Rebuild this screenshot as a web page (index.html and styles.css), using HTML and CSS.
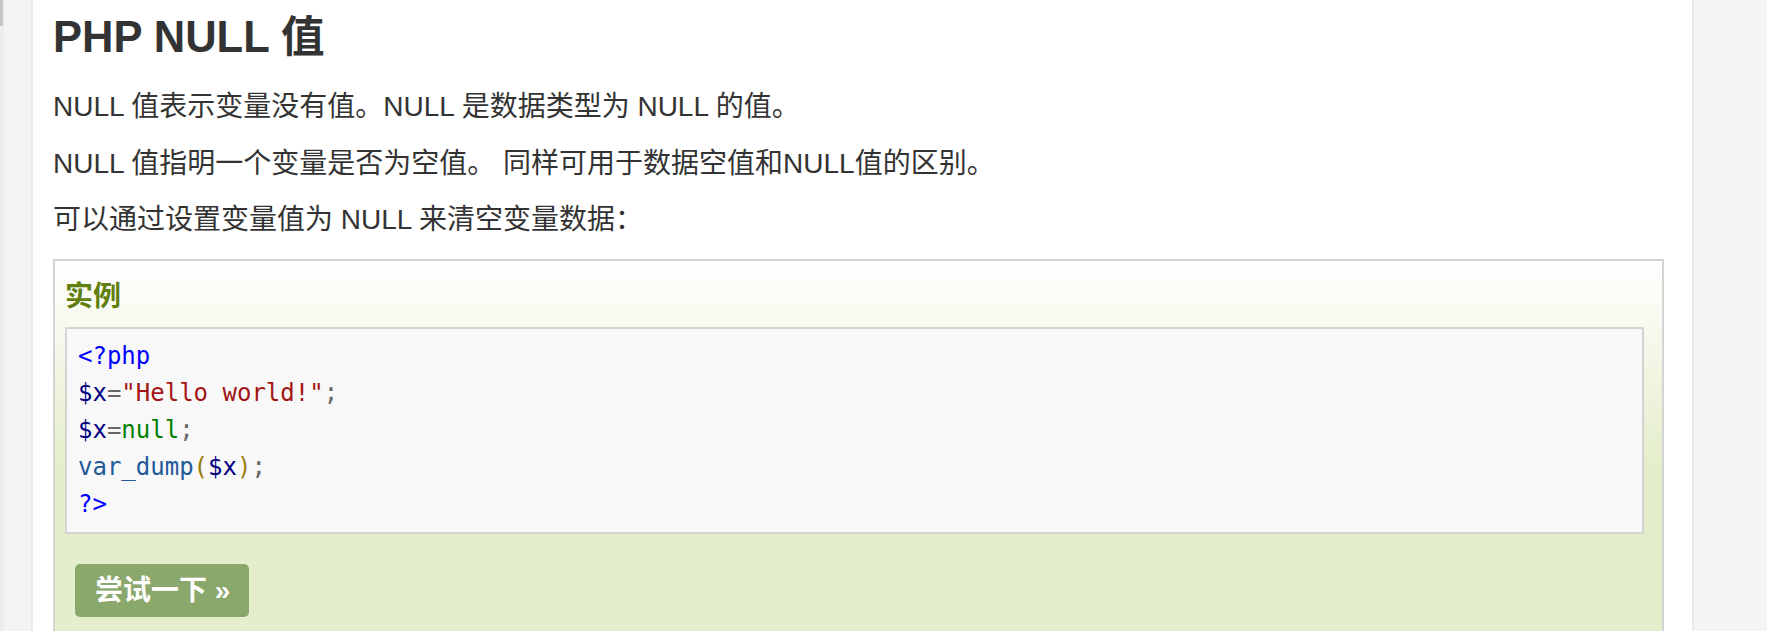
FILE: index.html
```html
<!DOCTYPE html>
<html lang="zh-CN">
<head>
<meta charset="utf-8">
<title>PHP NULL 值</title>
<link rel="stylesheet" href="styles.css">
</head>
<body>
<div class="page">
  <aside class="left-side">
    <div class="track"><div class="thumb"></div></div>
  </aside>
  <main class="content">
    <h1 class="title">PHP NULL 值</h1>
    <p class="para">NULL 值表示变量没有值。NULL 是数据类型为 NULL 的值。</p>
    <p class="para">NULL 值指明一个变量是否为空值。 同样可用于数据空值和NULL值的区别。</p>
    <p class="para">可以通过设置变量值为 NULL 来清空变量数据：</p>
    <div class="example">
      <h2 class="example-title">实例</h2>
      <div class="example-code"><pre class="code"><span class="tag">&lt;?php</span>
<span class="var">$x</span><span class="op">=</span><span class="str">"Hello world!"</span><span class="op">;</span>
<span class="var">$x</span><span class="op">=</span><span class="kw">null</span><span class="op">;</span>
<span class="fn">var_dump</span><span class="par">(</span><span class="var">$x</span><span class="par">)</span><span class="op">;</span>
<span class="tag">?&gt;</span></pre></div>
      <a class="try-btn" href="#">尝试一下 »</a>
    </div>
  </main>
  <aside class="right-side"></aside>
</div>
</body>
</html>
```
FILE: styles.css
```css
html, body {
  margin: 0;
  padding: 0;
  height: 100%;
  overflow: hidden;
  background: #fff;
}
body {
  font-family: "Liberation Sans", Arial, "Noto Sans CJK SC", sans-serif;
  color: #333;
}
.page {
  display: flex;
  height: 631px;
}
.left-side {
  width: 31px;
  flex: none;
  background: #f3f3f3;
  border-right: 2px solid #e9e9e9;
}
.track {
  width: 4px;
  height: 100%;
  background: #ececec;
}
.thumb {
  width: 3px;
  height: 26px;
  background: #c6c6c6;
}
.content {
  flex: 1;
  min-width: 0;
  padding: 12px 28px 0 20px;
  background: #fff;
}
.right-side {
  width: 73px;
  flex: none;
  background: #f4f4f4;
  border-left: 2px solid #e9e9e9;
}
.title {
  margin: 0 0 17px;
  font-size: 43.5px;
  line-height: 50px;
  font-weight: bold;
  color: #333;
}
.para {
  margin: 0;
  font-size: 28px;
  line-height: 56.5px;
}
.example {
  margin-top: 10px;
  border: 2px solid #d4d4d4;
  background-color: #e5eecc;
  background-image: linear-gradient(#fff, #e5eecc 200px);
  padding: 16px 18px 20px 10px;
}
.example-title {
  margin: 0 0 10px;
  font-size: 28px;
  line-height: 40px;
  font-weight: bold;
  color: #617f10;
}
.example-code {
  border: 2px solid #d4d4d4;
  background: #f8f8f8;
  padding: 9px 10px 9px 11px;
}
.code {
  margin: 0;
  font-family: "DejaVu Sans Mono", "Liberation Mono", monospace;
  font-size: 24px;
  line-height: 37px;
  color: #333;
}
.tag { color: #0000ff; }
.var { color: #000080; }
.op { color: #666; }
.str { color: #a31515; }
.kw { color: #008000; }
.fn { color: #23589a; }
.par { color: #9a7d0a; }
.try-btn {
  display: inline-block;
  margin: 30px 0 0 10px;
  height: 53px;
  line-height: 53px;
  padding: 0 20px;
  width: 134px;
  background: #8ba86c;
  color: #fff;
  font-size: 28px;
  font-weight: bold;
  text-decoration: none;
  border-radius: 5px;
  white-space: nowrap;
}
```
